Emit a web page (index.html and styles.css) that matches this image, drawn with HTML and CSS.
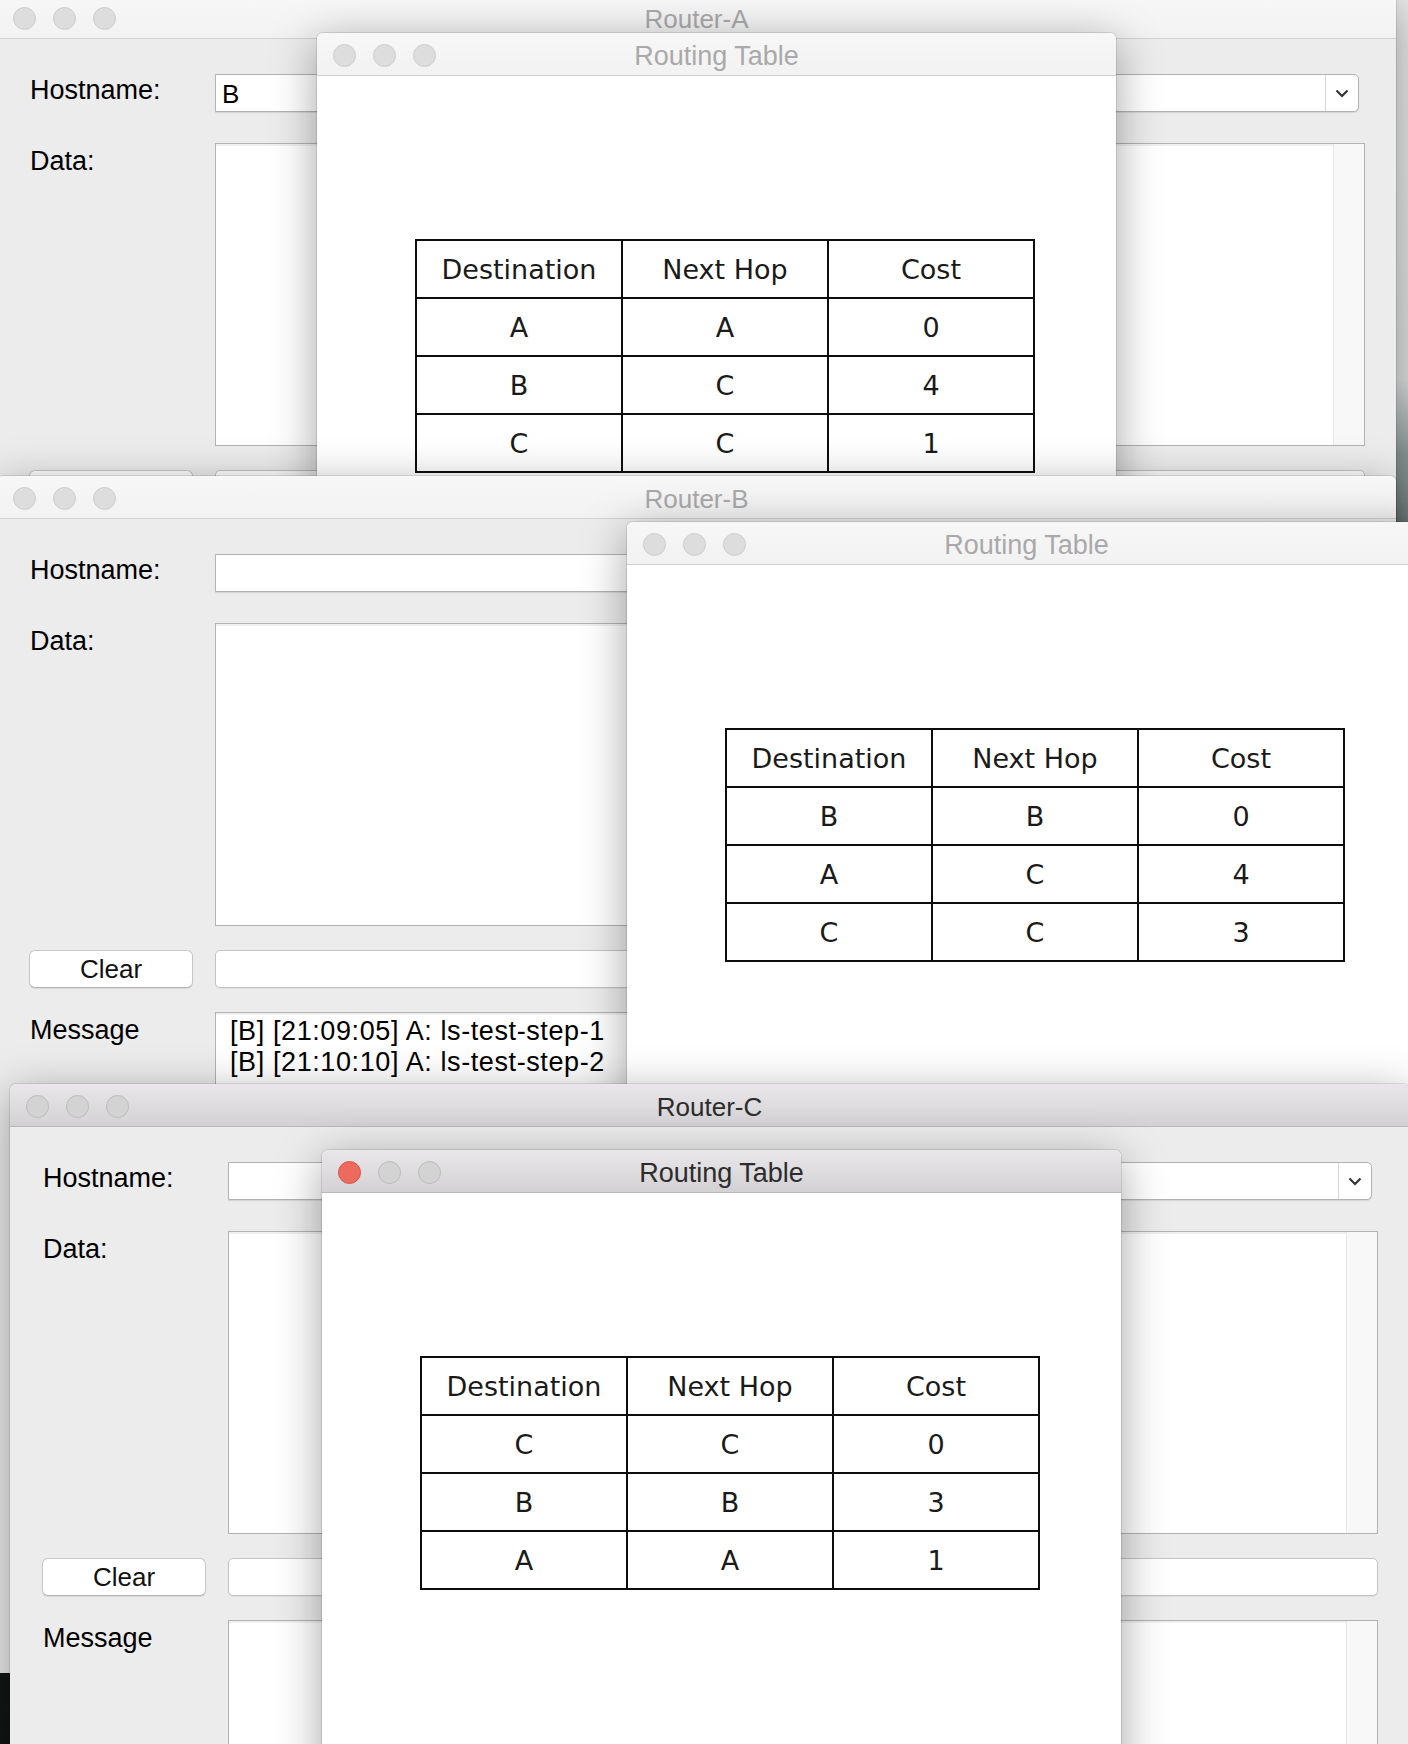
FILE: index.html
```html
<!DOCTYPE html>
<html>
<head>
<meta charset="utf-8">
<link rel="stylesheet" href="styles.css">
</head>
<body>
<div class="desktop">

  <section class="win router router-a">
    <header class="titlebar inactive">
      <div class="lights"><span></span><span></span><span></span></div>
      <div class="title">Router-A</div>
      <div></div>
    </header>
    <div class="form">
      <div class="label host-label">Hostname:</div>
      <div class="combo"><div class="combo-value">B</div><div class="combo-drop"><svg width="14" height="9" viewBox="0 0 14 9"><path d="M1.5 1.5 L7 7 L12.5 1.5" fill="none" stroke="#333" stroke-width="2.2"/></svg></div></div>
      <div class="label">Data:</div>
      <div class="textbox"><div class="textbox-body"></div><div class="scrolltrack"></div></div>
      <button class="clear">Clear</button>
      <div class="field"></div>
      <div class="label">Message</div>
      <div class="textbox"><div class="textbox-body"></div><div class="scrolltrack"></div></div>
    </div>
  </section>

  <section class="win rt rt-a">
    <header class="titlebar inactive">
      <div class="lights"><span></span><span></span><span></span></div>
      <div class="title">Routing Table</div>
      <div></div>
    </header>
    <div class="rt-body">
      <div class="rtable">
        <div class="cell">Destination</div><div class="cell">Next Hop</div><div class="cell">Cost</div>
        <div class="cell">A</div><div class="cell">A</div><div class="cell">0</div>
        <div class="cell">B</div><div class="cell">C</div><div class="cell">4</div>
        <div class="cell">C</div><div class="cell">C</div><div class="cell">1</div>
      </div>
    </div>
  </section>

  <section class="win router router-b">
    <header class="titlebar inactive">
      <div class="lights"><span></span><span></span><span></span></div>
      <div class="title">Router-B</div>
      <div></div>
    </header>
    <div class="form">
      <div class="label host-label">Hostname:</div>
      <div class="combo"><div class="combo-value"></div><div class="combo-drop"><svg width="14" height="9" viewBox="0 0 14 9"><path d="M1.5 1.5 L7 7 L12.5 1.5" fill="none" stroke="#333" stroke-width="2.2"/></svg></div></div>
      <div class="label">Data:</div>
      <div class="textbox"><div class="textbox-body"></div><div class="scrolltrack"></div></div>
      <button class="clear">Clear</button>
      <div class="field"></div>
      <div class="label">Message</div>
      <div class="textbox"><div class="textbox-body log">
        <div>[B] [21:09:05] A: ls-test-step-1</div>
        <div>[B] [21:10:10] A: ls-test-step-2</div>
      </div><div class="scrolltrack"></div></div>
    </div>
  </section>

  <section class="win rt rt-b">
    <header class="titlebar inactive">
      <div class="lights"><span></span><span></span><span></span></div>
      <div class="title">Routing Table</div>
      <div></div>
    </header>
    <div class="rt-body">
      <div class="rtable">
        <div class="cell">Destination</div><div class="cell">Next Hop</div><div class="cell">Cost</div>
        <div class="cell">B</div><div class="cell">B</div><div class="cell">0</div>
        <div class="cell">A</div><div class="cell">C</div><div class="cell">4</div>
        <div class="cell">C</div><div class="cell">C</div><div class="cell">3</div>
      </div>
    </div>
  </section>

  <section class="win router router-c">
    <header class="titlebar active">
      <div class="lights"><span></span><span></span><span></span></div>
      <div class="title">Router-C</div>
      <div></div>
    </header>
    <div class="form">
      <div class="label host-label">Hostname:</div>
      <div class="combo"><div class="combo-value"></div><div class="combo-drop"><svg width="14" height="9" viewBox="0 0 14 9"><path d="M1.5 1.5 L7 7 L12.5 1.5" fill="none" stroke="#333" stroke-width="2.2"/></svg></div></div>
      <div class="label">Data:</div>
      <div class="textbox"><div class="textbox-body"></div><div class="scrolltrack"></div></div>
      <button class="clear">Clear</button>
      <div class="field"></div>
      <div class="label">Message</div>
      <div class="textbox"><div class="textbox-body"></div><div class="scrolltrack"></div></div>
    </div>
  </section>

  <section class="win rt rt-c">
    <header class="titlebar active">
      <div class="lights"><span class="close"></span><span></span><span></span></div>
      <div class="title">Routing Table</div>
      <div></div>
    </header>
    <div class="rt-body">
      <div class="rtable">
        <div class="cell">Destination</div><div class="cell">Next Hop</div><div class="cell">Cost</div>
        <div class="cell">C</div><div class="cell">C</div><div class="cell">0</div>
        <div class="cell">B</div><div class="cell">B</div><div class="cell">3</div>
        <div class="cell">A</div><div class="cell">A</div><div class="cell">1</div>
      </div>
    </div>
  </section>

</div>
</body>
</html>
```

FILE: styles.css
```css
* { box-sizing: border-box; }
html, body { margin: 0; padding: 0; }
body {
  width: 1408px;
  height: 1744px;
  overflow: hidden;
  font-family: "Liberation Sans", Arial, sans-serif;
  background: linear-gradient(180deg, #e9e9e9 0, #dcdede 380px, #8f9c9c 455px, #4a5653 900px, #1d2622 1500px, #101613 1744px);
}
.desktop { position: relative; width: 1408px; height: 1744px; overflow: hidden; }

.win {
  position: absolute;
  display: flex;
  flex-direction: column;
  border-radius: 6px 6px 0 0;
  overflow: hidden;
  box-shadow: 0 10px 46px rgba(0,0,0,0.36), 0 0 0 1px rgba(0,0,0,0.10);
}
.router { width: 1399px; height: 1197px; background: #ececec; }
.rt { width: 799px; height: 680px; background: #ffffff; }

.router-a { left: -3px; top: -4px; z-index: 1; }
.rt-a { left: 317px; top: 33px; z-index: 2; }
.router-b { left: -3px; top: 476px; z-index: 3; }
.rt-b { left: 627px; top: 522px; z-index: 4; }
.router-c { left: 10px; top: 1084px; z-index: 5; }
.rt-c { left: 322px; top: 1150px; z-index: 6; }

/* title bars */
.titlebar {
  flex: 0 0 43px;
  display: grid;
  grid-template-columns: 1fr auto 1fr;
  align-items: center;
  border-bottom: 1px solid #d0d0d0;
}
.titlebar.inactive { background: linear-gradient(180deg, #f7f7f7, #f2f2f2); }
.titlebar.inactive .title { color: #a9a9a9; }
.titlebar.active { background: linear-gradient(180deg, #e9e7e9, #d3d1d3); border-bottom-color: #b9b7b9; }
.titlebar.active .title { color: #2c2c2c; }
.title { font-size: 26px; line-height: 30px; padding-top: 4px; white-space: nowrap; }
.rt .title { font-size: 27px; }
.lights { display: flex; gap: 17px; padding-left: 16px; padding-top: 2px; }
.lights span {
  width: 23px; height: 23px; border-radius: 50%;
  background: #dddddd; border: 1px solid #cdcdcd;
}
.titlebar.active .lights span { background: #d3d3d3; border-color: #bcbcbc; }
.titlebar.active .lights span.close { background: #ec6a5e; border-color: #d5564a; }

/* router form */
.form {
  flex: 1;
  display: grid;
  grid-template-columns: 164px 1fr;
  grid-template-rows: 45px 303px 38px 1fr;
  column-gap: 22px;
  row-gap: 24px;
  padding: 35px 31px 0 32px;
}
.label { font-size: 27px; line-height: 30px; color: #000; padding-left: 1px; padding-top: 3px; }
.host-label { padding-top: 0; margin-top: 1px; }

.combo {
  height: 38px;
  margin-right: 6px;
  display: flex;
  background: #fff;
  border: 1px solid #b3b3b3;
  border-radius: 0 5px 5px 0;
  box-shadow: 0 1px 1px rgba(0,0,0,0.10);
}
.combo-value { flex: 1; font-size: 26px; line-height: 38px; padding-left: 6px; color: #000; }
.combo-drop {
  width: 33px;
  border-left: 1px solid #d6d6d6;
  display: flex; align-items: center; justify-content: center;
}

.textbox {
  display: flex;
  background: #fff;
  border: 1px solid #b2b2b2;
  box-shadow: inset 0 2px 0 #f0f0f0;
}
.textbox-body { flex: 1; }
.scrolltrack { width: 31px; background: #f8f8f8; border-left: 1px solid #e8e8e8; }
.log { padding: 3px 0 0 14px; font-size: 27px; line-height: 31px; letter-spacing: 0.6px; color: #000; }

.clear {
  height: 38px;
  margin: 0;
  padding: 0;
  background: #fff;
  border: 1px solid #c6c6c6;
  border-bottom-color: #b3b3b3;
  border-radius: 6px;
  font-family: "Liberation Sans", Arial, sans-serif;
  font-size: 26px;
  color: #111;
  box-shadow: 0 1px 1px rgba(0,0,0,0.08);
}
.field {
  height: 38px;
  background: #fff;
  border: 1px solid #c3c3c3;
  border-radius: 5px;
  box-shadow: 0 1px 1px rgba(0,0,0,0.06);
}

/* routing table */
.rt-body { flex: 1; padding: 163px 0 0 98px; background: #fff; }
.rtable {
  width: 620px;
  display: grid;
  grid-template-columns: 204px 204px 204px;
  grid-auto-rows: 56px;
  gap: 2px;
  padding: 2px;
  background: #0d0d0d;
}
.cell {
  background: #fff;
  display: flex;
  align-items: center;
  justify-content: center;
  font-family: "DejaVu Sans", Verdana, sans-serif;
  font-size: 27px;
  color: #1a1a1a;
}
```
